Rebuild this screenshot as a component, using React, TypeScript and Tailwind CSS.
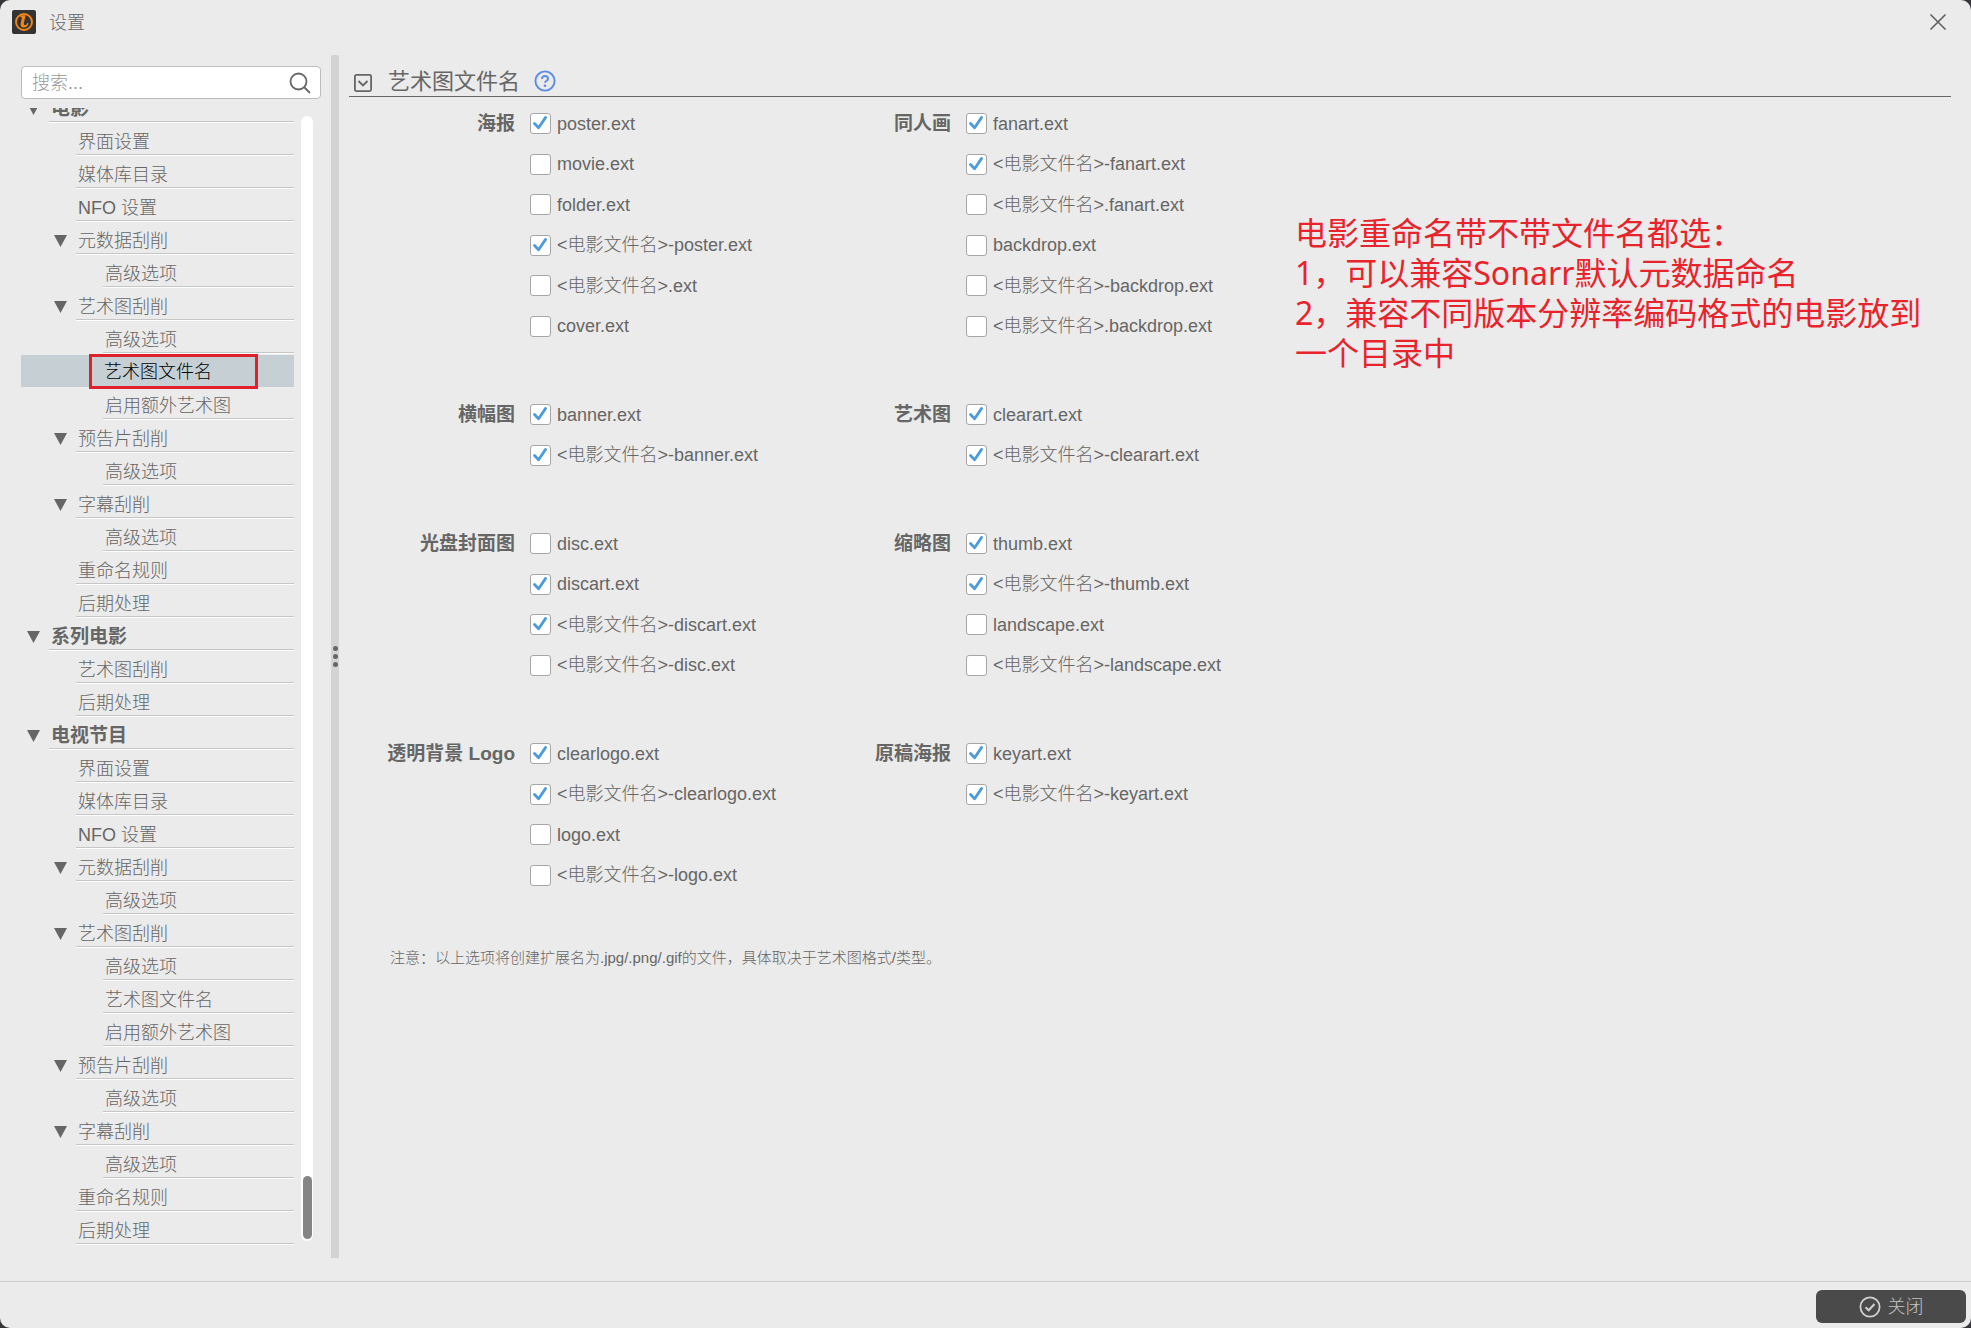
import React, { useState } from "react";

type TreeItem = { label: string; level: 0 | 1 | 2; open?: boolean; selected?: boolean };

const tree: TreeItem[] = [
  { label: "电影", level: 0, open: true },
  { label: "界面设置", level: 1 },
  { label: "媒体库目录", level: 1 },
  { label: "NFO 设置", level: 1 },
  { label: "元数据刮削", level: 1, open: true },
  { label: "高级选项", level: 2 },
  { label: "艺术图刮削", level: 1, open: true },
  { label: "高级选项", level: 2 },
  { label: "艺术图文件名", level: 2, selected: true },
  { label: "启用额外艺术图", level: 2 },
  { label: "预告片刮削", level: 1, open: true },
  { label: "高级选项", level: 2 },
  { label: "字幕刮削", level: 1, open: true },
  { label: "高级选项", level: 2 },
  { label: "重命名规则", level: 1 },
  { label: "后期处理", level: 1 },
  { label: "系列电影", level: 0, open: true },
  { label: "艺术图刮削", level: 1 },
  { label: "后期处理", level: 1 },
  { label: "电视节目", level: 0, open: true },
  { label: "界面设置", level: 1 },
  { label: "媒体库目录", level: 1 },
  { label: "NFO 设置", level: 1 },
  { label: "元数据刮削", level: 1, open: true },
  { label: "高级选项", level: 2 },
  { label: "艺术图刮削", level: 1, open: true },
  { label: "高级选项", level: 2 },
  { label: "艺术图文件名", level: 2 },
  { label: "启用额外艺术图", level: 2 },
  { label: "预告片刮削", level: 1, open: true },
  { label: "高级选项", level: 2 },
  { label: "字幕刮削", level: 1, open: true },
  { label: "高级选项", level: 2 },
  { label: "重命名规则", level: 1 },
  { label: "后期处理", level: 1 },
];

type Group = { title: string; options: [string, boolean][] };

const groups: Group[] = [
  {
    title: "海报",
    options: [
      ["poster.ext", true],
      ["movie.ext", false],
      ["folder.ext", false],
      ["<电影文件名>-poster.ext", true],
      ["<电影文件名>.ext", false],
      ["cover.ext", false],
    ],
  },
  {
    title: "同人画",
    options: [
      ["fanart.ext", true],
      ["<电影文件名>-fanart.ext", true],
      ["<电影文件名>.fanart.ext", false],
      ["backdrop.ext", false],
      ["<电影文件名>-backdrop.ext", false],
      ["<电影文件名>.backdrop.ext", false],
    ],
  },
  { title: "横幅图", options: [["banner.ext", true], ["<电影文件名>-banner.ext", true]] },
  { title: "艺术图", options: [["clearart.ext", true], ["<电影文件名>-clearart.ext", true]] },
  {
    title: "光盘封面图",
    options: [
      ["disc.ext", false],
      ["discart.ext", true],
      ["<电影文件名>-discart.ext", true],
      ["<电影文件名>-disc.ext", false],
    ],
  },
  {
    title: "缩略图",
    options: [
      ["thumb.ext", true],
      ["<电影文件名>-thumb.ext", true],
      ["landscape.ext", false],
      ["<电影文件名>-landscape.ext", false],
    ],
  },
  {
    title: "透明背景 Logo",
    options: [
      ["clearlogo.ext", true],
      ["<电影文件名>-clearlogo.ext", true],
      ["logo.ext", false],
      ["<电影文件名>-logo.ext", false],
    ],
  },
  { title: "原稿海报", options: [["keyart.ext", true], ["<电影文件名>-keyart.ext", true]] },
];

const indent = { 0: "ml-[6px]", 1: "ml-[33px]", 2: "ml-[60px]" };

function TreeRow({ item }: { item: TreeItem }) {
  if (item.selected) {
    return (
      <li className="mt-px flex h-8 bg-[#c5cfd4]">
        <button
          aria-current="page"
          className="-mt-px -mb-[2px] ml-[68px] w-[169px] border-3 border-[#df212b] pl-3 text-left text-black"
        >
          {item.label}
        </button>
      </li>
    );
  }
  return (
    <li className="flex h-[33px]">
      <span className={`${indent[item.level]} flex w-[22px] shrink-0 items-center pt-[5px]`}>
        {item.open && (
          <svg width="13" height="12" viewBox="0 0 13 12" fill="#666666" aria-hidden="true">
            <path d="M0 0h13L6.5 12z" />
          </svg>
        )}
      </span>
      <button
        className={`flex-1 border-b border-white text-left ${item.level === 0 ? "text-[19px] font-bold" : ""}`}
      >
        <span className="flex h-8 items-center border-b border-[#c6c6c6] pt-[7px] pl-[2px]">
          {item.label}
        </span>
      </button>
    </li>
  );
}

function Option({ label, initial }: { label: string; initial: boolean }) {
  const [checked, setChecked] = useState(initial);
  return (
    <label className="flex h-10 items-center gap-[6px] whitespace-nowrap odd:h-[41px]">
      <span className="relative flex">
        <input
          type="checkbox"
          checked={checked}
          onChange={(e) => setChecked(e.target.checked)}
          className="size-[21px] appearance-none rounded-[3px] border border-[#a6a6a6] bg-white"
        />
        {checked && (
          <svg
            className="pointer-events-none absolute inset-0"
            width="21"
            height="21"
            viewBox="0 0 21 21"
            fill="none"
            stroke="#4c9bdd"
            strokeWidth="2.8"
            aria-hidden="true"
          >
            <path d="M4.5 10.5L8.6 14.8L15.6 4.4" strokeLinecap="round" strokeLinejoin="round" />
          </svg>
        )}
      </span>
      <span>{label}</span>
    </label>
  );
}

export default function App() {
  return (
    <div className="h-screen bg-[#36363a] font-['Liberation_Sans','Noto_Sans_CJK_SC',sans-serif] text-[18px] leading-6 font-light text-[#666666]">
      <div className="flex h-full flex-col overflow-hidden rounded-[10px] bg-[#ebebeb]">
        <header className="flex h-11 shrink-0 items-center pr-6 pl-3">
          <svg width="24" height="24" viewBox="0 0 24 24" fill="none" aria-hidden="true">
            <rect width="24" height="24" rx="2" fill="#333333" />
            <circle cx="12" cy="12" r="8" stroke="#f08519" strokeWidth="1.9" />
            <path
              d="M8.600 5.200h5l-1.700 7.600c-.3 1.600.1 2.300 1 2.300 1.200 0 2-1 2.400-2.200l1.300.4c-.7 2.700-2.400 4.300-4.700 4.300-2.600 0-3.800-1.700-3.200-4.300l1.300-6H8.300z"
              fill="#f08519"
            />
          </svg>
          <h1 className="ml-[13px] flex-1 pt-[2px]">设置</h1>
          <button aria-label="关闭窗口">
            <svg width="18" height="18" viewBox="0 0 18 18" stroke="#606060" strokeWidth="1.6" aria-hidden="true">
              <path d="M1.500 1.500l15 15M16.500 1.500l-15 15" />
            </svg>
          </button>
        </header>

        <div className="flex min-h-0 flex-1 pt-[11px] pb-[23px]">
          <aside className="flex w-[331px] shrink-0 flex-col pt-[11px] pr-[10px] pl-[21px]">
            <div className="flex h-[33px] shrink-0 items-center rounded-[4px] border border-[#bcbcbc] bg-white pr-[9px] pl-[10px]">
              <input
                type="text"
                aria-label="搜索"
                placeholder="搜索..."
                className="min-w-0 flex-1 bg-transparent outline-none placeholder:text-[#999999]"
              />
              <svg width="22" height="22" viewBox="0 0 22 22" fill="none" stroke="#666666" strokeWidth="1.8" aria-hidden="true">
                <circle cx="9.500" cy="9.500" r="8" />
                <path d="M15 15l6 6" />
              </svg>
            </div>
            <div className="mt-[9px] flex min-h-0 flex-1 gap-[7px]">
              <nav aria-label="设置" className="min-w-0 flex-1 overflow-hidden">
                <ul className="-mt-[18px]">
                  {tree.map((item, i) => (
                    <TreeRow key={i} item={item} />
                  ))}
                </ul>
              </nav>
              <div className="mt-2 mr-2 mb-[17px] flex w-3 flex-col justify-end rounded-full bg-white py-[2px] pr-px pl-[2px]">
                <div className="h-[63px] rounded-full bg-[#858585]" />
              </div>
            </div>
          </aside>

          <div className="flex w-2 shrink-0 flex-col items-center justify-center gap-[3px] rounded-t-[2px] bg-[#d3d3d3]">
            <span className="size-[5px] rounded-full bg-[#666666]" />
            <span className="size-[5px] rounded-full bg-[#666666]" />
            <span className="size-[5px] rounded-full bg-[#666666]" />
          </div>

          <main className="min-w-0 flex-1 pr-5 pl-[10px]">
            <div className="flex h-[42px] items-center border-b border-[#666666] pt-3 pl-[5px]">
              <button aria-label="折叠" className="mt-[2px]">
                <svg width="18" height="18" viewBox="0 0 18 18" fill="none" stroke="#666666" strokeWidth="1.8" aria-hidden="true">
                  <rect x="0.900" y="0.900" width="16.200" height="16.200" rx="1.500" />
                  <path d="M4.500 7L9 11.500L13.500 7" />
                </svg>
              </button>
              <h2 className="ml-4 text-[22px] font-normal">艺术图文件名</h2>
              <button aria-label="帮助" className="mb-[2px] ml-[14px]">
                <svg width="22" height="22" viewBox="0 0 22 22" fill="none" stroke="#5c8ce6" strokeWidth="1.900" aria-hidden="true">
                  <circle cx="11" cy="11" r="9.600" />
                  <path d="M8 8.900c0-1.700 1.300-2.900 3-2.900s3 1.100 3 2.700c0 2.300-3 2.200-3 4.100" strokeWidth="2" />
                  <circle cx="11" cy="15.700" r="1.300" fill="#5c8ce6" stroke="none" />
                </svg>
              </button>
            </div>

            <div className="flex pt-[6px]">
              <div className="w-[946px] shrink-0">
                <div className="grid grid-cols-[436px_1fr] gap-y-12">
                  {groups.map((g) => (
                    <fieldset key={g.title} aria-label={g.title} className="flex gap-[15px]">
                      <div className="flex h-[41px] w-[166px] shrink-0 items-center justify-end text-[19px] font-bold">
                        {g.title}
                      </div>
                      <div>
                        {g.options.map(([label, on]) => (
                          <Option key={label} label={label} initial={on} />
                        ))}
                      </div>
                    </fieldset>
                  ))}
                </div>
                <p className="mt-[51px] ml-[41px] text-[15px]">
                  注意：以上选项将创建扩展名为.jpg/.png/.gif的文件，具体取决于艺术图格式/类型。
                </p>
              </div>
              <p className="mt-[110px] font-['Noto_Sans','Noto_Sans_CJK_SC',sans-serif] text-[32px] leading-10 font-normal whitespace-nowrap text-[#e8232c]">
                电影重命名带不带文件名都选：
                <br />
                1，可以兼容Sonarr默认元数据命名
                <br />
                2，兼容不同版本分辨率编码格式的电影放到
                <br />
                一个目录中
              </p>
            </div>
          </main>
        </div>

        <footer className="flex h-[47px] shrink-0 items-center justify-end border-t border-[#cfcfcf] pt-[3px] pr-[5px]">
          <button className="flex h-[33px] w-[150px] items-center justify-center gap-[7px] rounded-[6px] bg-[#4a4a4a] text-[#c4c4c4]">
            <svg width="22" height="22" viewBox="0 0 22 22" fill="none" stroke="#d0d0d0" strokeWidth="1.800" aria-hidden="true">
              <circle cx="11" cy="11" r="9.600" />
              <path d="M6.500 11.300L9.700 14.300L15.500 8" strokeWidth="2" />
            </svg>
            关闭
          </button>
        </footer>
      </div>
    </div>
  );
}
